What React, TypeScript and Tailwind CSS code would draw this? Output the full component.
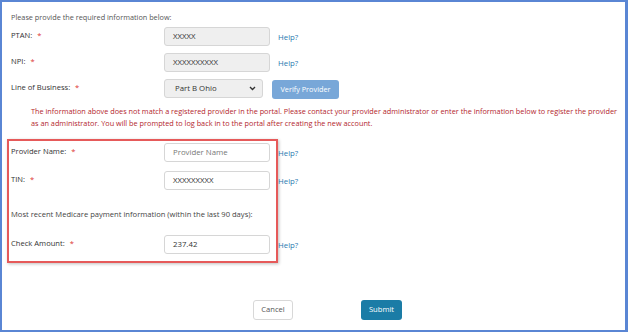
const font = { fontFamily: '"Open Sans", "Noto Sans", sans-serif' };

function Label({ text }: { text: string }) {
  return (
    <div className="w-[153px] shrink-0 pt-[2px] text-[7.6px] leading-[12px] text-[#333]">
      {text} <span className="ml-[3px] text-[#d33]">*</span>
    </div>
  );
}

function Help() {
  return (
    <span className="ml-[8px] mt-[4px] shrink-0 whitespace-nowrap text-[7.8px] leading-[12px] text-[#2a7ab0]">
      Help?
    </span>
  );
}

function Field({ value, muted, grey }: { value: string; muted?: boolean; grey?: boolean }) {
  return (
    <div
      className={`w-[106px] h-[19px] shrink-0 rounded-[3px] border border-[#d6d6d6] px-[8px] flex items-center text-[7.8px] ${
        grey ? "bg-[#efefef]" : "bg-white"
      } ${muted ? "text-[#777]" : "text-[#333]"}`}
    >
      {value}
    </div>
  );
}

export default function App() {
  return (
    <div
      className="w-[628px] h-[332px] bg-white border-t-2 border-l-2 border-b-2 border-r-[3px] border-[#5a86d4] flex flex-col"
      style={font}
    >
      <div className="pl-[9px] pt-[9px] text-[7.3px] leading-[12px] text-[#555]">
        Please provide the required information below:
      </div>

      <div className="pl-[9px] mt-[4px] flex flex-col gap-[7px]">
        <div className="flex items-start">
          <Label text="PTAN:" />
          <Field value="XXXXX" grey />
          <Help />
        </div>
        <div className="flex items-start">
          <Label text="NPI:" />
          <Field value="XXXXXXXXXX" grey />
          <Help />
        </div>
        <div className="flex items-start">
          <Label text="Line of Business:" />
          <div className="w-[99px] h-[19px] rounded-[3px] border border-[#d6d6d6] bg-[#efefef] pl-[10px] pr-[6px] flex items-center justify-between text-[7.8px] text-[#333]">
            <span>Part B Ohio</span>
            <svg width="7" height="5" viewBox="0 0 7 5">
              <path d="M1 1l2.5 2.5L6 1" fill="none" stroke="#333" strokeWidth="1.4" />
            </svg>
          </div>
          <button className="ml-[9px] mt-[1px] w-[67px] h-[19px] rounded-[3px] bg-[#78a7d8] text-white text-[7.3px]">
            Verify Provider
          </button>
        </div>
      </div>

      <p className="pl-[29px] mt-[6px] text-[7.3px] leading-[12px] text-[#b3262d] whitespace-nowrap">
        The information above does not match a registered provider in the portal. Please contact your provider administrator or enter the information below to register the provider
        <br />
        as an administrator. You will be prompted to log back in to the portal after creating the new account.
      </p>

      <div className="ml-[5px] mt-[10px] w-[271px] h-[124px] border-2 border-[#e65a5a] shadow-[1px_1px_3px_rgba(0,0,0,0.25)] pl-[2px] pt-[2px] flex flex-col">
        <div className="flex items-start">
          <Label text="Provider Name:" />
          <Field value="Provider Name" muted />
          <Help />
        </div>
        <div className="flex items-start mt-[9px]">
          <Label text="TIN:" />
          <Field value="XXXXXXXXX" />
          <Help />
        </div>
        <div className="mt-[18px] text-[7.6px] leading-[12px] text-[#444] whitespace-nowrap">
          Most recent Medicare payment information (within the last 90 days):
        </div>
        <div className="flex items-start mt-[15px]">
          <Label text="Check Amount:" />
          <Field value="237.42" />
          <Help />
        </div>
      </div>

      <div className="mt-[37px] flex pl-[251px]">
        <button className="w-[40px] h-[20px] rounded-[3px] border border-[#d8d8d8] bg-white text-[7.6px] text-[#555]">
          Cancel
        </button>
        <button className="ml-[68px] w-[41px] h-[20px] rounded-[3px] bg-[#1b7ca6] text-[7.6px] text-white">
          Submit
        </button>
      </div>
    </div>
  );
}
